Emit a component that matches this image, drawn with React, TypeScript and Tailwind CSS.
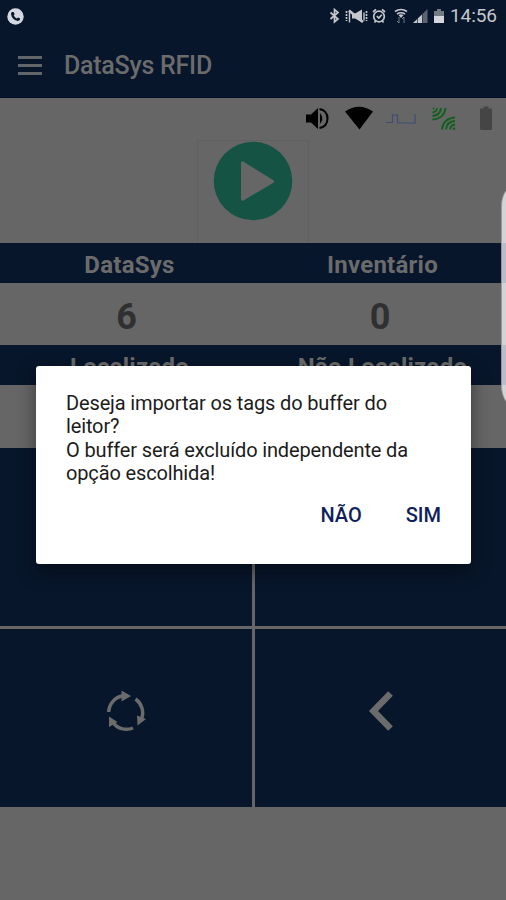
import React from "react";

function StatusBar() {
  return (
    <div className="flex h-8 items-center justify-between pl-[7px] pr-[9px] text-[#c4c8cd]">
      <svg width="17" height="17" viewBox="0 0 17 17">
        <circle cx="8.5" cy="8.5" r="8.2" fill="#d3d8e0" />
        <path d="M5.1 4.1 6.6 3.9 7.7 6.3 6.7 7.3Q7.6 9.5 9.9 10.4L11 9.4 13.2 10.6Q13.3 12.8 10.9 12.9C6.7 12.6 4 9 4.1 5.6Q4.2 4.5 5.1 4.1Z" fill="#08162b" />
      </svg>
      <div className="flex items-center">
        <svg width="116" height="18" viewBox="0 0 116 18" fill="none" stroke="currentColor" strokeWidth="1.7">
          <path d="M1.5 5.5 9 12 5.5 15V2.5L9 5.5 1.5 12" />
          <path d="M17.5 4v10M37.5 4v10" strokeDasharray="2 1" />
          <path d="M20.5 3.5v12M35 5.5v8" strokeWidth="1.4" />
          <path d="M23 6.5h3l7-4v13l-7-4h-3z" fill="currentColor" stroke="none" />
          <path d="M20 3.5 34 15" strokeWidth="2.5" />
          <circle cx="50" cy="9.5" r="5.3" />
          <path d="M44 5l3-2.6M56 5l-3-2.6M45.5 15.5l1.5-2M54.5 15.5l-1.5-2M47.8 9l2 2 3-3.3" />
          <path d="M66 4.5Q72 .5 78 4.5M68 7Q72 4.5 76 7" />
          <path d="M69.5 8Q72 6.5 74.5 8L72 11z" fill="currentColor" stroke="none" />
          <path d="M70 10v6m-2-2 2 2M75 16v-6m-2 2 2-2" strokeWidth="1" opacity=".55" />
          <path d="M84 16 93.5 7v9z" fill="currentColor" stroke="none" />
          <path d="M93.5 7 98.5 2v14h-5z" fill="#5b6470" stroke="none" />
          <path d="M88.5 11v5M93.5 6v10" stroke="#26334a" strokeWidth=".8" />
          <path d="M105 4h3V2h4v2h3v6h-10z" fill="#737a84" stroke="none" />
          <path d="M105 9h10v7h-10z" fill="#d3d6da" stroke="none" />
        </svg>
        <span className="ml-[5px] w-[47px] whitespace-nowrap text-[19px] leading-8 tracking-[-0.1px]">14:56</span>
      </div>
    </div>
  );
}

function DeviceIcons() {
  return (
    <svg className="block" width="216" height="42" viewBox="290 98 216 42" fill="none">
      <path d="M306 114.5h5l7-6.5v21l-7-6.5h-5z" fill="#000" />
      <path d="M320 113q4.5 5.5 0 11z" fill="#000" />
      <path d="M319.5 109q8 1.5 8 9.5t-8 9.5" stroke="#000" strokeWidth="2" />
      <path d="M345 111.5Q359 102 373 111.5L359.5 129.5z" fill="#000" />
      <path d="M386 122.5h6.5M392.5 123v-8h5v8h17.500v-9" stroke="#3e4d73" strokeWidth="1.2" />
      <g stroke="#12601d" strokeWidth="1.9">
        <path d="M432.5 112.5q4-.5 4.500-4.500M432.500 116q7.500-.5 8.500-8M432.500 119.500q12-1 13-11.500" />
        <path d="M442 129.500q1-11 13-12M446 129.500q.5-8 9-8.500M450 129.500q.5-4.500 5-5" />
        <circle cx="433.5" cy="108.5" r=".9" fill="#12601d" stroke="none" />
        <circle cx="454" cy="128.700" r="1.3" fill="#12601d" stroke="none" />
      </g>
      <path d="M480 108.500h3.500v-2h5v2h3.500v20q0 1.500-1.500 1.500h-9q-1.500 0-1.500-1.500z" fill="#454545" />
    </svg>
  );
}

function HeadingRow({ left, right }: { left: string; right: string }) {
  return (
    <div className="grid h-10 grid-cols-[256px_250px] items-center bg-[#08162b] text-center text-[24px] font-bold tracking-[0.25px] text-[#6b6b6b]">
      <span className="pl-[3px] pt-[3px]">{left}</span>
      <span className="pl-[3px] pt-[3px]">{right}</span>
    </div>
  );
}

function Tile({ children }: { children?: React.ReactNode }) {
  return <div className="flex items-center justify-center bg-[#08162b]">{children}</div>;
}

function ImportDialog() {
  return (
    <div className="absolute left-9 top-[366px] flex h-[198px] w-[435px] flex-col rounded-[3px] bg-white px-[30px] pt-[26px] shadow-[0_7px_18px_1px_rgba(0,0,0,0.4)]">
      <p className="whitespace-nowrap text-[20px] leading-[23.3px] tracking-[-0.14px] text-[#1c1c1c]">
        Deseja importar os tags do buffer do
        <br />
        leitor?
        <br />
        O buffer será excluído independente da
        <br />
        opção escolhida!
      </p>
      <div className="mt-[15px] flex justify-end gap-[44px] text-[20px] font-medium leading-[30px] text-[#101f5c]">
        <button>NÃO</button>
        <button>SIM</button>
      </div>
    </div>
  );
}

export default function App() {
  return (
    <div className="relative h-[900px] w-[506px] overflow-hidden bg-[#666666] font-['Roboto',sans-serif]">
      <header className="h-[98px] border-b border-[#050c29] bg-[#08162b]">
        <StatusBar />
        <div className="flex h-[66px] items-center pl-[18px]">
          <div className="flex w-6 flex-col gap-[5px]">
            <i className="h-[3px] bg-[#62656a]" />
            <i className="h-[3px] bg-[#62656a]" />
            <i className="h-[3px] bg-[#62656a]" />
          </div>
          <h1 className="ml-[22px] mt-[2px] text-[25px] font-medium tracking-[-0.25px] text-[#6b6b6b]">DataSys RFID</h1>
        </div>
      </header>
      <section className="flex h-[145px] flex-col">
        <div className="flex h-[42px] justify-end">
          <DeviceIcons />
        </div>
        <div className="ml-[197px] flex h-[103px] w-[112px] justify-center border border-b-0 border-[#606060]">
          <svg width="80" height="80" viewBox="0 0 80 80">
            <circle cx="40" cy="40" r="39.3" fill="#155445" />
            <path d="M28 22.5v35q0 3.500 3 1.700L60 42q2.500-1.500 0-3L31 21q-3-1.800-3 1.500Z" fill="#666" />
          </svg>
        </div>
      </section>
      <HeadingRow left="DataSys" right="Inventário" />
      <div className="grid h-[62px] grid-cols-2 items-center pt-[5px] text-center text-[36px] font-bold text-[#303030]">
        <span>6</span>
        <span className="pl-px">0</span>
      </div>
      <HeadingRow left="Localizado" right="Não Localizado" />
      <div className="h-[63px]" />
      <main className="grid h-[359px] grid-cols-[252px_251px] grid-rows-[178px_178px] gap-[3px]">
        <Tile />
        <Tile />
        <Tile>
          <svg className="mt-[-14px]" width="42" height="42" viewBox="105 689 42 42" fill="none" stroke="#6b6b6b" strokeWidth="3.5">
            <path d="M108.700 711A17 17 0 0 1 123 694.800M135.500 698A17 17 0 0 1 141.500 718M133 727A17 17 0 0 1 112.500 721" />
            <path d="M121.500 689.500v11l9.500-5.500zM137 714.500l9 3.500-8.500 6.500zM109 715.500v10.500l8.500-5z" fill="#6b6b6b" stroke="none" />
          </svg>
        </Tile>
        <Tile>
          <svg className="mt-[-14px]" width="26" height="42" viewBox="0 0 26 42" fill="none" stroke="#6b6b6b" strokeWidth="6.5">
            <path d="M22.500 3.500 5.500 21l17 17.500" />
          </svg>
        </Tile>
      </main>
      <div className="absolute left-[501px] top-[188px] h-[216px] w-5 rounded-[18px/34px] border-l border-[#999] bg-[#d3d3d5]">
        <div className="mt-[55px] h-10 bg-[#b9bdc9]" />
        <div className="mt-[62px] h-10 bg-[#b9bdc9]" />
      </div>
      <ImportDialog />
    </div>
  );
}
